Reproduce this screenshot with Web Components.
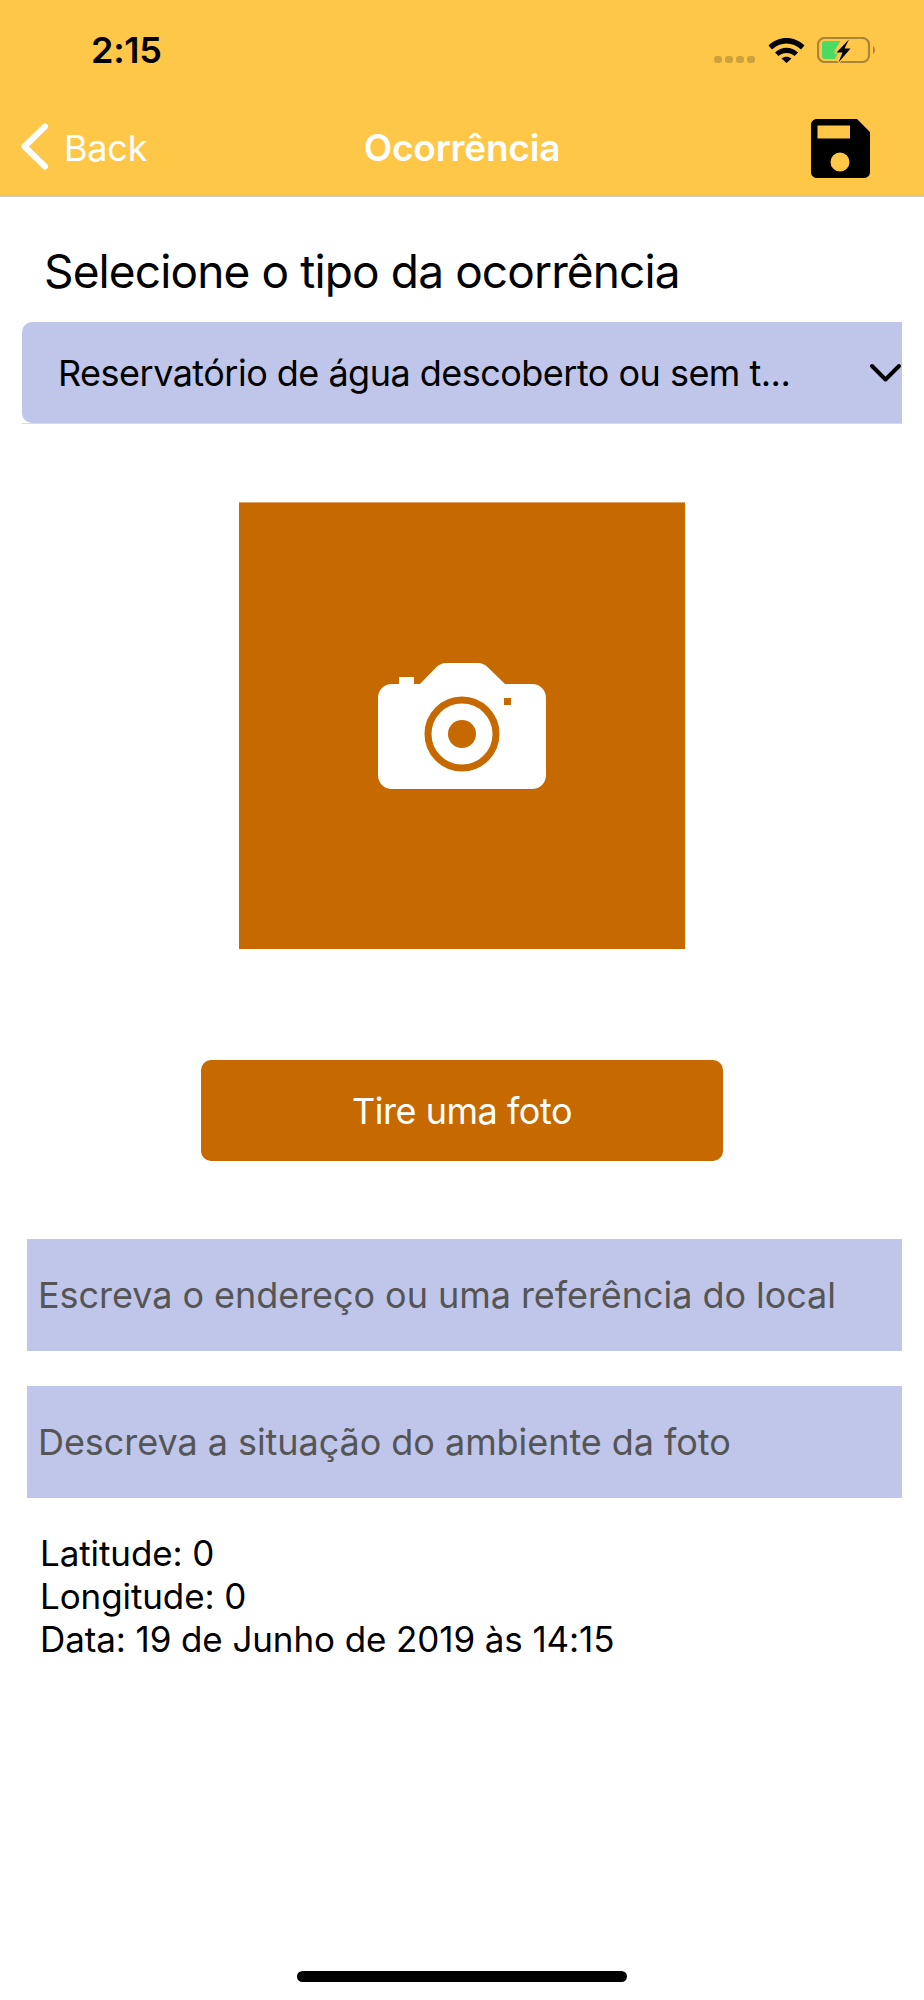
<!DOCTYPE html>
<html lang="pt">
<head>
<meta charset="utf-8">
<title>Ocorrência</title>
<style>
	html, body {
		margin: 0;
		background: #fff;
	}

	body {
		font-family: Inter, "Liberation Sans", sans-serif;
	}
</style>
</head>
<body>
<app-screen>
	<status-bar time="2:15"></status-bar>
	<nav-bar back="Back" heading="Ocorrência"></nav-bar>
	<form-title>Selecione o tipo da ocorrência</form-title>
	<type-select>Reservatório de água descoberto ou sem t...</type-select>
	<photo-box></photo-box>
	<action-button>Tire uma foto</action-button>
	<text-field>Escreva o endereço ou uma referência do local</text-field>
	<text-field second>Descreva a situação do ambiente da foto</text-field>
	<info-block>
		<div>Latitude: 0</div>
		<div>Longitude: 0</div>
		<div>Data: 19 de Junho de 2019 às 14:15</div>
	</info-block>
	<home-indicator></home-indicator>
</app-screen>

<script>
/**
 * Small helper: every element only has a static shadow root
 *
 * @param {string} name of the custom element
 * @param {function(HTMLElement): string} render gives the shadow markup
 */
function defineStatic(name, render) {
	customElements.define(name, class extends HTMLElement {
		constructor() {
			super();
			this.attachShadow({ mode: 'open' });
		}

		connectedCallback() {
			this.shadowRoot.innerHTML = render(this);
		}
	});
}

defineStatic('app-screen', () => `
	<style>
		:host {
			display: flex;
			flex-direction: column;
			width: 924px;
			height: 2000px;
			overflow: hidden;
			background: #fff;
			color: #000;
		}
	</style>
	<slot></slot>
`);

defineStatic('status-bar', el => `
	<style>
		:host {
			display: flex;
			align-items: flex-start;
			height: 82px;
			padding: 30px 48px 0 91px;
			box-sizing: border-box;
			background: #ffc748;
		}

		.time {
			font-size: 36px;
			font-weight: 600;
			line-height: 41px;
			letter-spacing: -0.3px;
		}

		.icons {
			display: flex;
			align-items: flex-start;
			margin-left: auto;
			margin-top: 7px;
		}

		.dots {
			display: flex;
			gap: 3px;
			margin-top: 19px;
			margin-right: 13px;
		}

		.dots i {
			width: 8px;
			height: 7px;
			border-radius: 3px;
			background: #cda23c;
		}

		svg {
			display: block;
		}
	</style>
	<div class="time">${el.getAttribute('time')}</div>
	<div class="icons">
		<div class="dots"><i></i><i></i><i></i><i></i></div>
		<svg width="37" height="26" viewBox="0 0 37 26" style="margin-right:12px">
			<path d="M0.5 8.5C10.5 -1.5 26.5 -1.5 36.5 8.5L33 12.5C25 4.5 12 4.5 4 12.5Z"/>
			<path d="M7 15.5C13.5 9 23.5 9 30 15.5L26.5 19C22 15 15 15 10.5 19Z"/>
			<path d="M13.5 21.5C16.5 19 20.5 19 23.5 21.5L18.5 26Z"/>
		</svg>
		<svg width="59" height="26" viewBox="0 0 59 26">
			<rect x="1" y="1" width="51" height="24" rx="6.500" fill="none" stroke="#a8853b" stroke-width="2.200"/>
			<path d="M56 9C58.500 10.500 58.500 15.500 56 17Z" fill="#a8853b"/>
			<path d="M8 4H23.500L17 14.500H22L18 22H8C6 22 5 21 5 19V7C5 5 6 4 8 4Z" fill="#4cd964"/>
			<path d="M32 2.500L19.500 15.500H25.500L21.500 25.500L33.500 11.500H27.500Z" stroke="#ffc748" stroke-width="2.500" paint-order="stroke"/>
		</svg>
	</div>
`);

defineStatic('nav-bar', el => `
	<style>
		:host {
			display: grid;
			grid-template-columns: 1fr auto 1fr;
			align-items: center;
			height: 115px;
			padding-top: 18px;
			box-sizing: border-box;
			background: #ffc748;
			border-bottom: 2px solid #c9c7c4;
			color: #fff;
		}

		.back {
			display: flex;
			align-items: center;
			gap: 16px;
			margin-left: 21px;
			font-size: 36px;
			letter-spacing: -0.2px;
		}

		.back svg {
			margin-top: -3px;
		}

		h1 {
			margin: 0;
			font-size: 37px;
			font-weight: 600;
			letter-spacing: -0.2px;
		}

		.save {
			justify-self: end;
			display: block;
			margin: 2px 54px 0 0;
		}
	</style>
	<div class="back">
		<svg width="27" height="47" viewBox="0 0 27 47">
			<path d="M24 3.500L3.500 23.500L24 43.500" fill="none" stroke="#fff" stroke-width="6" stroke-linecap="round" stroke-linejoin="round"/>
		</svg>
		<span>${el.getAttribute('back')}</span>
	</div>
	<h1>${el.getAttribute('heading')}</h1>
	<svg class="save" width="59" height="59" viewBox="0 0 59 59">
		<path fill-rule="evenodd" d="M6 0H46L59 13V53C59 56.500 56.500 59 53 59H6C2.500 59 0 56.500 0 53V6C0 2.500 2.500 0 6 0ZM6.500 6.500V19.500H39V6.500ZM29 33.500A9.500 9.500 0 1 0 29 52.500A9.500 9.500 0 1 0 29 33.500Z"/>
	</svg>
`);

defineStatic('form-title', () => `
	<style>
		:host {
			display: block;
			margin: 46px 0 0 44px;
			font-size: 46px;
			line-height: 56px;
			letter-spacing: -0.87px;
			color: #000;
		}
	</style>
	<slot></slot>
`);

defineStatic('type-select', () => `
	<style>
		:host {
			display: block;
			width: 880px;
			margin: 23px 0 0 22px;
			border-bottom: 1px solid #dcd8dc;
		}

		.box {
			display: flex;
			align-items: center;
			justify-content: space-between;
			height: 101px;
			padding-left: 36px;
			box-sizing: border-box;
			overflow: hidden;
			background: #c0c6e9;
			border-radius: 10px 0 0 10px;
			font-size: 36px;
			letter-spacing: -0.52px;
		}

		svg {
			display: block;
			flex: none;
		}
	</style>
	<div class="box">
		<span><slot></slot></span>
		<svg width="33" height="20" viewBox="0 0 33 20">
			<path d="M3 3L16.500 16.500L30 3" fill="none" stroke="#000" stroke-width="4" stroke-linecap="round" stroke-linejoin="round"/>
		</svg>
	</div>
`);

defineStatic('photo-box', () => `
	<style>
		:host {
			display: flex;
			align-items: center;
			justify-content: center;
			align-self: center;
			width: 446px;
			height: 446px;
			margin-top: 79px;
			background: #c66900;
			box-shadow: 0 -1px 0 #e0a566;
		}

		svg {
			display: block;
		}
	</style>
	<svg width="168" height="126" viewBox="0 0 168 126">
		<path fill="#fff" d="M21 21V14H36V21H42L58 4.500C61 1.500 64 0 68 0H100C104 0 107 1.500 110 4.500L127 21H154C162 21 168 27 168 35V112C168 120 162 126 154 126H14C6 126 0 120 0 112V35C0 27 6 21 14 21Z"/>
		<circle cx="84" cy="71" r="34" fill="none" stroke="#c66900" stroke-width="7"/>
		<circle cx="84" cy="71" r="14" fill="#c66900"/>
		<rect x="126" y="35" width="7" height="7" fill="#c66900"/>
	</svg>
`);

defineStatic('action-button', () => `
	<style>
		:host {
			display: flex;
			align-items: center;
			justify-content: center;
			align-self: center;
			width: 522px;
			height: 101px;
			margin-top: 111px;
			background: #c66900;
			border-radius: 10px;
			color: #fff;
			font-size: 36px;
			letter-spacing: -0.45px;
		}
	</style>
	<slot></slot>
`);

defineStatic('text-field', el => `
	<style>
		:host {
			display: flex;
			align-items: center;
			width: 875px;
			height: 112px;
			margin: ${el.hasAttribute('second') ? 35 : 78}px 0 0 27px;
			padding-left: 11px;
			box-sizing: border-box;
			background: #c0c6e9;
			color: #555;
			font-size: 36px;
			letter-spacing: -0.05px;
		}
	</style>
	<slot></slot>
`);

defineStatic('info-block', () => `
	<style>
		:host {
			display: block;
			margin: 34px 0 0 40px;
			font-size: 35px;
			line-height: 43px;
			letter-spacing: -0.1px;
			color: #000;
		}
	</style>
	<slot></slot>
`);

defineStatic('home-indicator', () => `
	<style>
		:host {
			display: block;
			align-self: center;
			width: 330px;
			height: 11px;
			margin-top: auto;
			margin-bottom: 18px;
			border-radius: 6px;
			background: #000;
		}
	</style>
`);
</script>
</body>
</html>
